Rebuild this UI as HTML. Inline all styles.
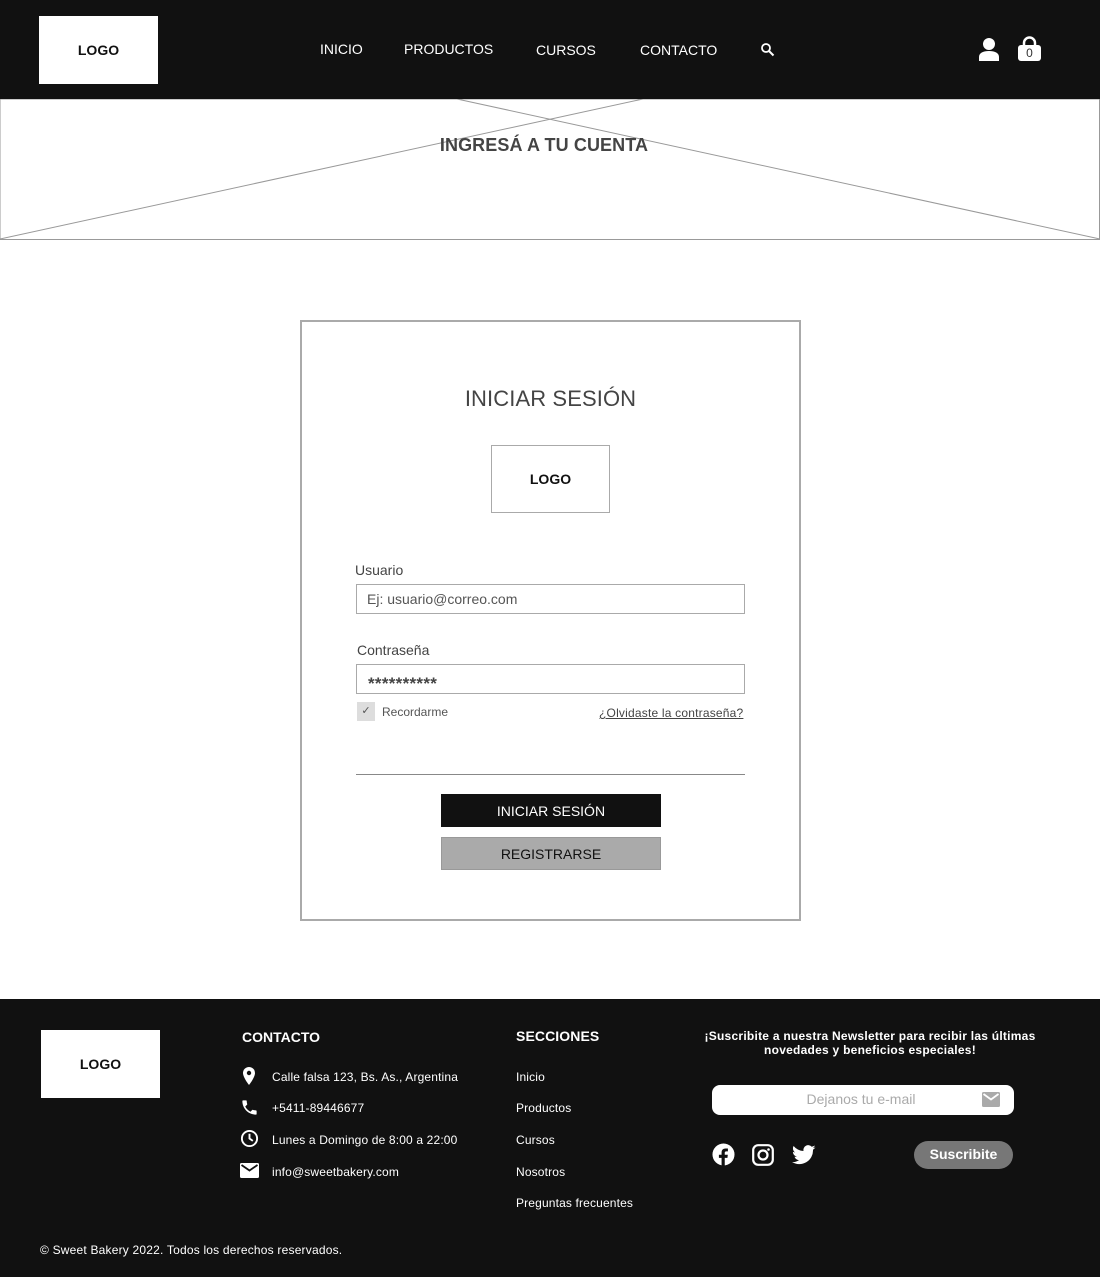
<!DOCTYPE html>
<html><head><meta charset="utf-8"><style>
*{margin:0;padding:0;box-sizing:border-box}
body{width:1100px;height:1277px;position:relative;font-family:"Liberation Sans",sans-serif;background:#fff;overflow:hidden}
.a{position:absolute}
.hdr{left:0;top:0;width:1100px;height:99px;background:#111}
.logo{background:#fff;font-weight:bold;font-size:14px;color:#111;display:flex;align-items:center;justify-content:center}
.nav{color:#fff;font-size:14px}
.ft{color:#fff}
.fs{font-size:12px;color:#fff;letter-spacing:0.15px}
</style></head><body>
<div class="a hdr"></div>
<div class="a logo" style="left:39px;top:16px;width:119px;height:68px">LOGO</div>
<div class="a nav" style="left:320px;top:41px">INICIO</div>
<div class="a nav" style="left:404px;top:41px">PRODUCTOS</div>
<div class="a nav" style="left:536px;top:42px">CURSOS</div>
<div class="a nav" style="left:640px;top:42px">CONTACTO</div>
<svg class="a" style="left:760px;top:42px" width="15" height="15" viewBox="0 0 15 15"><circle cx="6" cy="6" r="4" stroke="#fff" stroke-width="1.8" fill="none"/><path d="M9 9l4.5 4.5" stroke="#fff" stroke-width="2"/></svg>
<svg class="a" style="left:978px;top:37px" width="22" height="25" viewBox="0 0 22 25"><circle cx="11" cy="7" r="6" fill="#fff"/><path d="M1 24v-4c0-4 4-6 10-6s10 2 10 6v4z" fill="#fff"/></svg>
<svg class="a" style="left:1017px;top:35px" width="25" height="27" viewBox="0 0 25 27"><path d="M7 12V8a5.5 5.5 0 0 1 11 0v4" stroke="#fff" stroke-width="2.5" fill="none"/><rect x="1" y="10" width="23" height="16" rx="3" fill="#fff"/></svg>
<div class="a" style="left:1017px;top:46px;width:25px;text-align:center;font-size:12px;color:#333">0</div>
<svg class="a" style="left:0;top:99px" width="1100" height="141"><rect x="0" y="0" width="1099.5" height="140.5" fill="none" stroke="#999"/><line x1="0" y1="140" x2="643" y2="0" stroke="#999"/><line x1="457" y1="0" x2="1100" y2="140" stroke="#999"/></svg>
<div class="a" style="left:0;width:1088px;top:135px;text-align:center;font-weight:bold;font-size:18px;color:#444;letter-spacing:0.1px">INGRESÁ A TU CUENTA</div>
<div class="a" style="left:300px;top:320px;width:501px;height:601px;border:2px solid #aaa"></div>
<div class="a" style="left:300px;width:501px;top:386px;text-align:center;font-size:22px;color:#444;letter-spacing:0.1px">INICIAR SESIÓN</div>
<div class="a logo" style="left:491px;top:445px;width:119px;height:68px;border:1px solid #aaa">LOGO</div>
<div class="a" style="left:355px;top:562px;font-size:14px;color:#444">Usuario</div>
<div class="a" style="left:356px;top:584px;width:389px;height:30px;border:1px solid #aaa;font-size:14px;color:#555;padding:6px 10px">Ej: usuario@correo.com</div>
<div class="a" style="left:357px;top:642px;font-size:14px;color:#444">Contraseña</div>
<div class="a" style="left:356px;top:664px;width:389px;height:30px;border:1px solid #aaa;font-size:17px;font-weight:bold;color:#444;padding:9px 11px 0;letter-spacing:0.3px">**********</div>
<div class="a" style="left:357px;top:702px;width:18px;height:19px;background:#ddd;font-size:11px;color:#555;text-align:center;line-height:19px">✓</div>
<div class="a" style="left:382px;top:705px;font-size:12px;color:#555">Recordarme</div>
<div class="a" style="left:599px;top:706px;font-size:12px;color:#444;text-decoration:underline;letter-spacing:0.2px">¿Olvidaste la contraseña?</div>
<div class="a" style="left:356px;top:774px;width:389px;height:1px;background:#888"></div>
<div class="a" style="left:441px;top:794px;width:220px;height:33px;background:#111;color:#fff;font-size:14px;text-align:center;line-height:34px">INICIAR SESIÓN</div>
<div class="a" style="left:441px;top:837px;width:220px;height:33px;background:#aaa;border:1px solid #999;color:#111;font-size:14px;text-align:center;line-height:32px">REGISTRARSE</div>
<div class="a" style="left:0;top:999px;width:1100px;height:278px;background:#111"></div>
<div class="a logo" style="left:41px;top:1030px;width:119px;height:68px">LOGO</div>
<div class="a ft" style="left:242px;top:1029px;font-size:14px;font-weight:bold">CONTACTO</div>
<svg class="a" style="left:240px;top:1066px" width="18" height="20" viewBox="0 0 18 20"><path d="M9 1a6 6 0 0 0-6 6c0 4.5 6 12 6 12s6-7.5 6-12a6 6 0 0 0-6-6z" fill="#fff"/><circle cx="9" cy="7" r="2.2" fill="#111"/></svg>
<svg class="a" style="left:240px;top:1098px" width="19" height="19" viewBox="0 0 24 24"><path d="M6.6 10.8c1.4 2.8 3.8 5.1 6.6 6.6l2.2-2.2c.3-.3.7-.4 1-.2 1.1.4 2.3.6 3.6.6.6 0 1 .4 1 1V20c0 .6-.4 1-1 1C10.6 21 3 13.4 3 4c0-.6.4-1 1-1h3.5c.6 0 1 .4 1 1 0 1.3.2 2.5.6 3.6.1.3 0 .7-.2 1z" fill="#fff"/></svg>
<svg class="a" style="left:240px;top:1129px" width="19" height="19" viewBox="0 0 20 20"><circle cx="10" cy="10" r="8" stroke="#fff" stroke-width="2" fill="none"/><path d="M10 5v5l3.5 2.5" stroke="#fff" stroke-width="2" fill="none"/></svg>
<svg class="a" style="left:240px;top:1163px" width="19" height="15" viewBox="0 0 19 15"><rect x="0" y="0" width="19" height="15" rx="1.5" fill="#fff"/><path d="M1.5 2l8 5.5 8-5.5" stroke="#111" stroke-width="1.8" fill="none"/></svg>
<div class="a fs" style="left:272px;top:1070px">Calle falsa 123, Bs. As., Argentina</div>
<div class="a fs" style="left:272px;top:1101px">+5411-89446677</div>
<div class="a fs" style="left:272px;top:1133px">Lunes a Domingo de 8:00 a 22:00</div>
<div class="a fs" style="left:272px;top:1165px">info@sweetbakery.com</div>
<div class="a ft" style="left:516px;top:1028px;font-size:14px;font-weight:bold;letter-spacing:0.1px">SECCIONES</div>
<div class="a fs" style="left:516px;top:1070px">Inicio</div>
<div class="a fs" style="left:516px;top:1101px">Productos</div>
<div class="a fs" style="left:516px;top:1133px">Cursos</div>
<div class="a fs" style="left:516px;top:1165px">Nosotros</div>
<div class="a fs" style="left:516px;top:1196px">Preguntas frecuentes</div>
<div class="a ft" style="left:695px;width:350px;top:1029px;text-align:center;font-size:12px;font-weight:bold;line-height:14px;letter-spacing:0.25px">¡Suscribite a nuestra Newsletter para recibir las últimas novedades y beneficios especiales!</div>
<div class="a" style="left:712px;top:1085px;width:302px;height:30px;background:#fff;border-radius:8px;color:#aaa;font-size:14px;text-align:center;line-height:29px;padding-right:4px">Dejanos tu e-mail</div>
<svg class="a" style="left:982px;top:1092px" width="18" height="15"><rect width="18" height="15" rx="1.5" fill="#aaa"/><path d="M1.5 2l7.5 5.5 7.5-5.5" stroke="#fff" stroke-width="1.8" fill="none"/></svg>
<svg class="a" style="left:712px;top:1143px" width="23" height="23" viewBox="0 0 24 24"><circle cx="12" cy="12" r="11.5" fill="#fff"/><path d="M13.3 24v-8.5h2.8l.4-3.2h-3.2v-2c0-.9.3-1.6 1.6-1.6h1.7V5.8c-.3 0-1.3-.1-2.5-.1-2.5 0-4.1 1.5-4.1 4.2v2.4H7.2v3.2H10V24z" fill="#111"/></svg>
<svg class="a" style="left:752px;top:1144px" width="22" height="22" viewBox="0 0 22 22"><rect x="1.2" y="1.2" width="19.6" height="19.6" rx="5" stroke="#fff" stroke-width="2.2" fill="none"/><circle cx="11" cy="11" r="4.5" stroke="#fff" stroke-width="2.2" fill="none"/><circle cx="16.5" cy="5.5" r="1.3" fill="#fff"/></svg>
<svg class="a" style="left:792px;top:1145px" width="24" height="20" viewBox="0 0 24 20"><path d="M23.5 2.4c-.9.4-1.8.6-2.8.8 1-.6 1.8-1.5 2.1-2.7-.9.6-2 1-3.1 1.2A4.8 4.8 0 0 0 11.5 6 13.7 13.7 0 0 1 1.6 1c-1.300 2.2-.6 5 1.5 6.4-.8 0-1.500-.2-2.200-.6 0 2.3 1.600 4.300 3.900 4.800-.7.2-1.500.2-2.200.1.6 2 2.400 3.300 4.500 3.300A9.700 9.700 0 0 1 0 17a13.700 13.700 0 0 0 21-12.200c1-.7 1.800-1.500 2.500-2.400z" fill="#fff"/></svg>
<div class="a" style="left:914px;top:1141px;width:99px;height:28px;background:#777;border-radius:14px;color:#fff;font-weight:bold;font-size:14px;text-align:center;line-height:27px">Suscribite</div>
<div class="a fs" style="left:40px;top:1243px;letter-spacing:0.2px">© Sweet Bakery 2022. Todos los derechos reservados.</div>
</body></html>
